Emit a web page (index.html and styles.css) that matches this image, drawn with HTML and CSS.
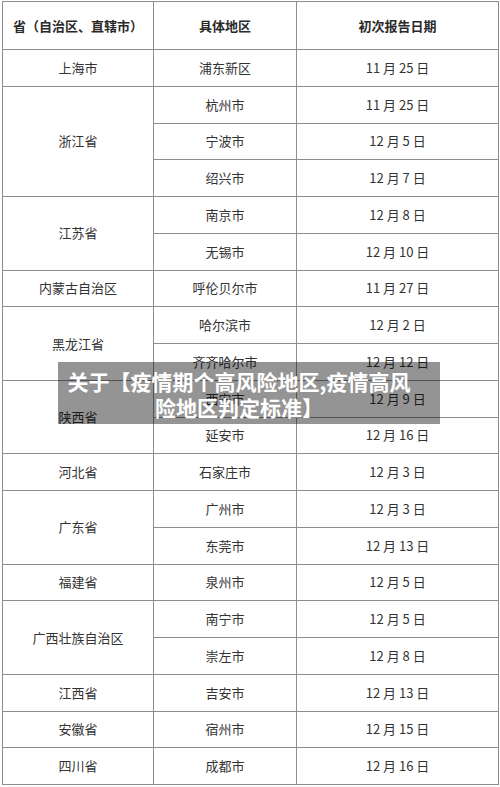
FILE: index.html
```html
<!DOCTYPE html>
<html lang="zh-CN">
<head>
<meta charset="utf-8">
<title>高风险地区</title>
<link rel="stylesheet" href="styles.css">
</head>
<body>
<div class="page">
  <table class="risk">
    <colgroup>
      <col class="c1"><col class="c2"><col class="c3">
    </colgroup>
    <thead>
      <tr><th>省（自治区、直辖市）</th><th>具体地区</th><th>初次报告日期</th></tr>
    </thead>
    <tbody>
      <tr><td>上海市</td><td>浦东新区</td><td>11 月 25 日</td></tr>
      <tr><td rowspan="3">浙江省</td><td>杭州市</td><td>11 月 25 日</td></tr>
      <tr><td>宁波市</td><td>12 月 5 日</td></tr>
      <tr><td>绍兴市</td><td>12 月 7 日</td></tr>
      <tr><td rowspan="2">江苏省</td><td>南京市</td><td>12 月 8 日</td></tr>
      <tr><td>无锡市</td><td>12 月 10 日</td></tr>
      <tr><td>内蒙古自治区</td><td>呼伦贝尔市</td><td>11 月 27 日</td></tr>
      <tr><td rowspan="2">黑龙江省</td><td>哈尔滨市</td><td>12 月 2 日</td></tr>
      <tr><td>齐齐哈尔市</td><td>12 月 12 日</td></tr>
      <tr><td rowspan="2">陕西省</td><td>西安市</td><td>12 月 9 日</td></tr>
      <tr><td>延安市</td><td>12 月 16 日</td></tr>
      <tr><td>河北省</td><td>石家庄市</td><td>12 月 3 日</td></tr>
      <tr><td rowspan="2">广东省</td><td>广州市</td><td>12 月 3 日</td></tr>
      <tr><td>东莞市</td><td>12 月 13 日</td></tr>
      <tr><td>福建省</td><td>泉州市</td><td>12 月 5 日</td></tr>
      <tr><td rowspan="2">广西壮族自治区</td><td>南宁市</td><td>12 月 5 日</td></tr>
      <tr><td>崇左市</td><td>12 月 8 日</td></tr>
      <tr><td>江西省</td><td>吉安市</td><td>12 月 13 日</td></tr>
      <tr><td>安徽省</td><td>宿州市</td><td>12 月 15 日</td></tr>
      <tr><td>四川省</td><td>成都市</td><td>12 月 16 日</td></tr>
    </tbody>
  </table>
  <div class="caption">关于【疫情期个高风险地区,疫情高风险地区判定标准】</div>
</div>
</body>
</html>
```

FILE: styles.css
```css
html, body {
  margin: 0;
  padding: 0;
  background: #ffffff;
}
.page {
  position: relative;
  width: 500px;
  height: 787px;
  overflow: hidden;
  padding: 1px 0 0 2px;
  box-sizing: border-box;
  font-family: "Noto Sans CJK SC", "Noto Sans", sans-serif;
  color: #333333;
}
.risk {
  border-collapse: collapse;
  width: 496px;
  table-layout: fixed;
  border: 1.5px solid #8e8e8e;
}
.c1 { width: 151px; }
.c2 { width: 143px; }
.c3 { width: 202px; }
.risk th,
.risk td {
  border: 1px solid #8e8e8e;
  text-align: center;
  vertical-align: middle;
  padding: 0;
  font-size: 13px;
  line-height: 16px;
}
.risk th {
  height: 47px;
  font-weight: 700;
  color: #2a2a2a;
}
.risk td {
  height: 35.75px;
  font-weight: 400;
}
.caption {
  position: absolute;
  left: 58px;
  top: 362px;
  width: 382px;
  height: 62px;
  box-sizing: border-box;
  padding: 6px 26px 0 6px;
  background: rgba(0, 0, 0, 0.42);
  color: #ffffff;
  font-size: 21px;
  font-weight: 700;
  line-height: 26px;
  text-align: center;
}
```
